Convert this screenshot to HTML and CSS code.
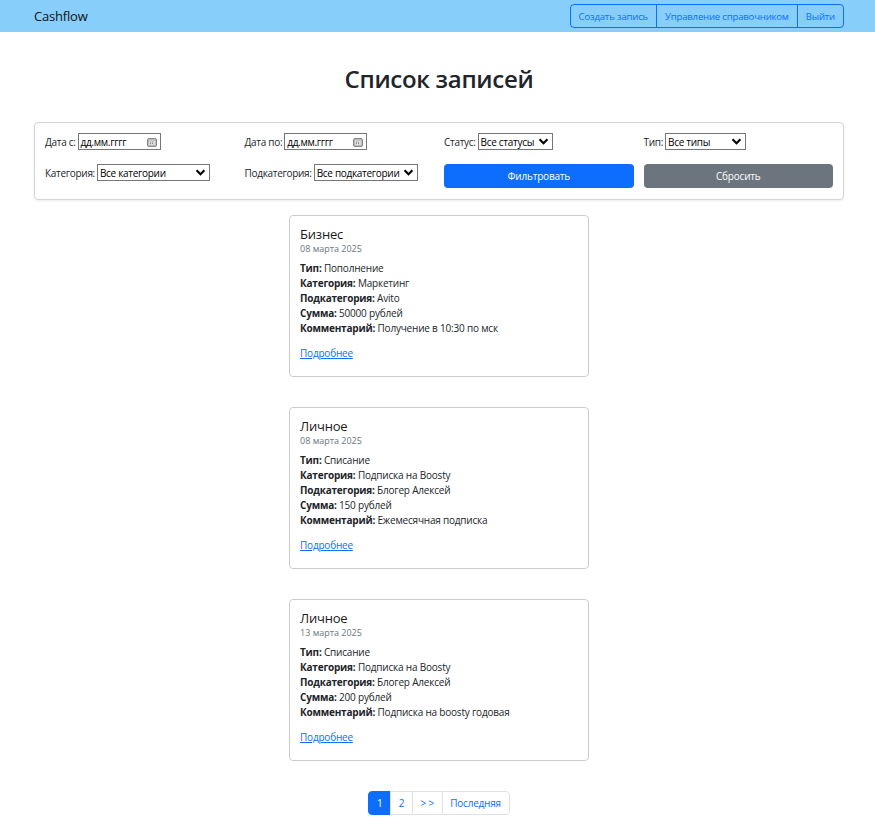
FILE: index.html
```html
<!DOCTYPE html>
<html lang="ru">
<head>
<meta charset="utf-8">
<title>Cashflow</title>
<link rel="stylesheet" href="styles.css">
</head>
<body>
<header class="navbar">
  <div class="brand">Cashflow</div>
  <div class="btn-group">
    <a class="nav-btn">Создать запись</a>
    <a class="nav-btn">Управление справочником</a>
    <a class="nav-btn">Выйти</a>
  </div>
</header>
<main class="container">
  <h1 class="title">Список записей</h1>
  <form class="filters">
    <div class="field"><span class="lbl">Дата с:</span><span class="box date">дд.мм.гггг<svg class="cal" viewBox="0 0 10 10" width="10" height="10"><rect x="0.5" y="1.5" width="9" height="8" rx="1.5" fill="#bbb" stroke="#888"/><rect x="2" y="3.5" width="6" height="4.5" fill="#ddd"/><path d="M3 5h1M5 5h1M3 6.5h1M5 6.5h1" stroke="#888"/></svg></span></div>
    <div class="field"><span class="lbl">Дата по:</span><span class="box date">дд.мм.гггг<svg class="cal" viewBox="0 0 10 10" width="10" height="10"><rect x="0.5" y="1.5" width="9" height="8" rx="1.5" fill="#bbb" stroke="#888"/><rect x="2" y="3.5" width="6" height="4.5" fill="#ddd"/><path d="M3 5h1M5 5h1M3 6.5h1M5 6.5h1" stroke="#888"/></svg></span></div>
    <div class="field"><span class="lbl">Статус:</span><span class="box sel w-status">Все статусы<svg class="chev" viewBox="0 0 12 8" width="11" height="7"><path d="M1.5 1.5l4.5 4.5 4.5-4.5" fill="none" stroke="#000" stroke-width="2.4"/></svg></span></div>
    <div class="field"><span class="lbl">Тип:</span><span class="box sel w-type">Все типы<svg class="chev" viewBox="0 0 12 8" width="11" height="7"><path d="M1.5 1.5l4.5 4.5 4.5-4.5" fill="none" stroke="#000" stroke-width="2.4"/></svg></span></div>
    <div class="field"><span class="lbl">Категория:</span><span class="box sel w-cat">Все категории<svg class="chev" viewBox="0 0 12 8" width="11" height="7"><path d="M1.5 1.5l4.5 4.5 4.5-4.5" fill="none" stroke="#000" stroke-width="2.4"/></svg></span></div>
    <div class="field"><span class="lbl">Подкатегория:</span><span class="box sel w-sub">Все подкатегории<svg class="chev" viewBox="0 0 12 8" width="11" height="7"><path d="M1.5 1.5l4.5 4.5 4.5-4.5" fill="none" stroke="#000" stroke-width="2.4"/></svg></span></div>
    <button type="button" class="btn btn-primary">Фильтровать</button>
    <button type="button" class="btn btn-secondary">Сбросить</button>
  </form>

  <div class="list">
    <article class="card">
      <h2 class="card-title">Бизнес</h2>
      <div class="card-date">08 марта 2025</div>
      <p class="row"><b>Тип:</b> Пополнение</p>
      <p class="row"><b>Категория:</b> Маркетинг</p>
      <p class="row"><b>Подкатегория:</b> Avito</p>
      <p class="row"><b>Сумма:</b> 50000 рублей</p>
      <p class="row"><b>Комментарий:</b> Получение в 10:30 по мск</p>
      <a class="more" href="#">Подробнее</a>
    </article>
    <article class="card">
      <h2 class="card-title">Личное</h2>
      <div class="card-date">08 марта 2025</div>
      <p class="row"><b>Тип:</b> Списание</p>
      <p class="row"><b>Категория:</b> Подписка на Boosty</p>
      <p class="row"><b>Подкатегория:</b> Блогер Алексей</p>
      <p class="row"><b>Сумма:</b> 150 рублей</p>
      <p class="row"><b>Комментарий:</b> Ежемесячная подписка</p>
      <a class="more" href="#">Подробнее</a>
    </article>
    <article class="card">
      <h2 class="card-title">Личное</h2>
      <div class="card-date">13 марта 2025</div>
      <p class="row"><b>Тип:</b> Списание</p>
      <p class="row"><b>Категория:</b> Подписка на Boosty</p>
      <p class="row"><b>Подкатегория:</b> Блогер Алексей</p>
      <p class="row"><b>Сумма:</b> 200 рублей</p>
      <p class="row"><b>Комментарий:</b> Подписка на boosty годовая</p>
      <a class="more" href="#">Подробнее</a>
    </article>
  </div>

  <nav class="pagination">
    <a class="page active">1</a>
    <a class="page">2</a>
    <a class="page">&gt; &gt;</a>
    <a class="page">Последняя</a>
  </nav>
</main>
</body>
</html>
```
FILE: styles.css
```css
* { box-sizing: border-box; }
html, body { margin: 0; padding: 0; }
body {
  font-family: "Open Sans", "Noto Sans", sans-serif;
  font-size: 10px;
  color: #212529;
  background: #fff;
}
.navbar {
  height: 32px;
  background: #87cefa;
  display: flex;
  align-items: center;
  justify-content: space-between;
  padding: 0 31px 0 34px;
}
.brand { font-size: 13px; color: #111; letter-spacing: -0.2px; }
.btn-group {
  display: flex;
  border: 1px solid #0d6efd;
  border-radius: 4px;
  height: 24px;
}
.nav-btn {
  display: flex;
  align-items: center;
  padding: 0 8px;
  color: #0d6efd;
  font-size: 9.6px;
  letter-spacing: -0.2px;
  border-left: 1px solid #0d6efd;
}
.nav-btn:first-child { border-left: 0; }
.container { padding: 0 31px 0 34px; }
.title {
  margin: 32px 0 0;
  height: 58px;
  text-align: center;
  font-size: 24px;
  font-weight: 600;
  line-height: 30px;
  letter-spacing: -0.3px;
}
.filters {
  border: 1px solid #d5d5d5;
  border-radius: 4px;
  box-shadow: 0 1px 3px rgba(0,0,0,0.08);
  padding: 10px 10px 11px;
  display: grid;
  grid-template-columns: repeat(4, 1fr);
  column-gap: 10px;
  row-gap: 14px;
  align-items: start;
}
.field { display: flex; align-items: center; height: 17px; white-space: nowrap; }
.lbl { margin-right: 2px; letter-spacing: -0.3px; }
.box {
  display: inline-flex;
  align-items: center;
  justify-content: space-between;
  height: 17px;
  border: 1px solid #767676;
  padding: 0 2px 0 2px;
  color: #000;
  letter-spacing: -0.3px;
  background: #fff;
  white-space: nowrap;
  overflow: hidden;
}
.date { width: 83px; }
.cal { margin-right: 1px; flex: none; }
.w-status { width: 75px; }
.w-type { width: 81px; }
.w-cat { width: 113px; }
.w-sub { width: 104px; }
.chev { margin-left: 2px; margin-right: 1px; flex: none; }
.btn {
  height: 24px;
  border: 0;
  border-radius: 4px;
  color: #fff;
  font-family: inherit;
  font-size: 10px;
  letter-spacing: -0.2px;
}
.btn-primary { background: #0d6efd; }
.btn-secondary { background: #6c757d; }
.list {
  display: flex;
  flex-direction: column;
  align-items: center;
  gap: 30px;
  margin-top: 15px;
}
.card {
  width: 300px;
  border: 1px solid #ccc;
  border-radius: 4px;
  padding: 10px 10px 15px;
}
.card-title {
  margin: 0;
  font-size: 13px;
  font-weight: 500;
  line-height: 16px;
  letter-spacing: -0.2px;
  color: #1a1a1a;
}
.card-date {
  color: #6c757d;
  font-size: 9px;
  line-height: 14px;
  margin-bottom: 5px;
}
.row {
  margin: 0;
  line-height: 15px;
  letter-spacing: -0.2px;
}
.row b { font-weight: 700; }
.more {
  display: inline-block;
  margin-top: 10px;
  color: #0d6efd;
  text-decoration: underline;
  letter-spacing: -0.2px;
  line-height: 15px;
}
.pagination {
  display: flex;
  justify-content: center;
  margin-top: 30px;
  padding-bottom: 20px;
}
.page {
  height: 24px;
  padding: 0 7.6px;
  display: flex;
  align-items: center;
  border: 1px solid #dee2e6;
  margin-left: -1px;
  color: #0d6efd;
  font-size: 10px;
  letter-spacing: -0.2px;
}
.page:first-child { border-radius: 4px 0 0 4px; margin-left: 0; }
.page:last-child { border-radius: 0 4px 4px 0; }
.page.active { background: #0d6efd; border-color: #0d6efd; color: #fff; }
```
